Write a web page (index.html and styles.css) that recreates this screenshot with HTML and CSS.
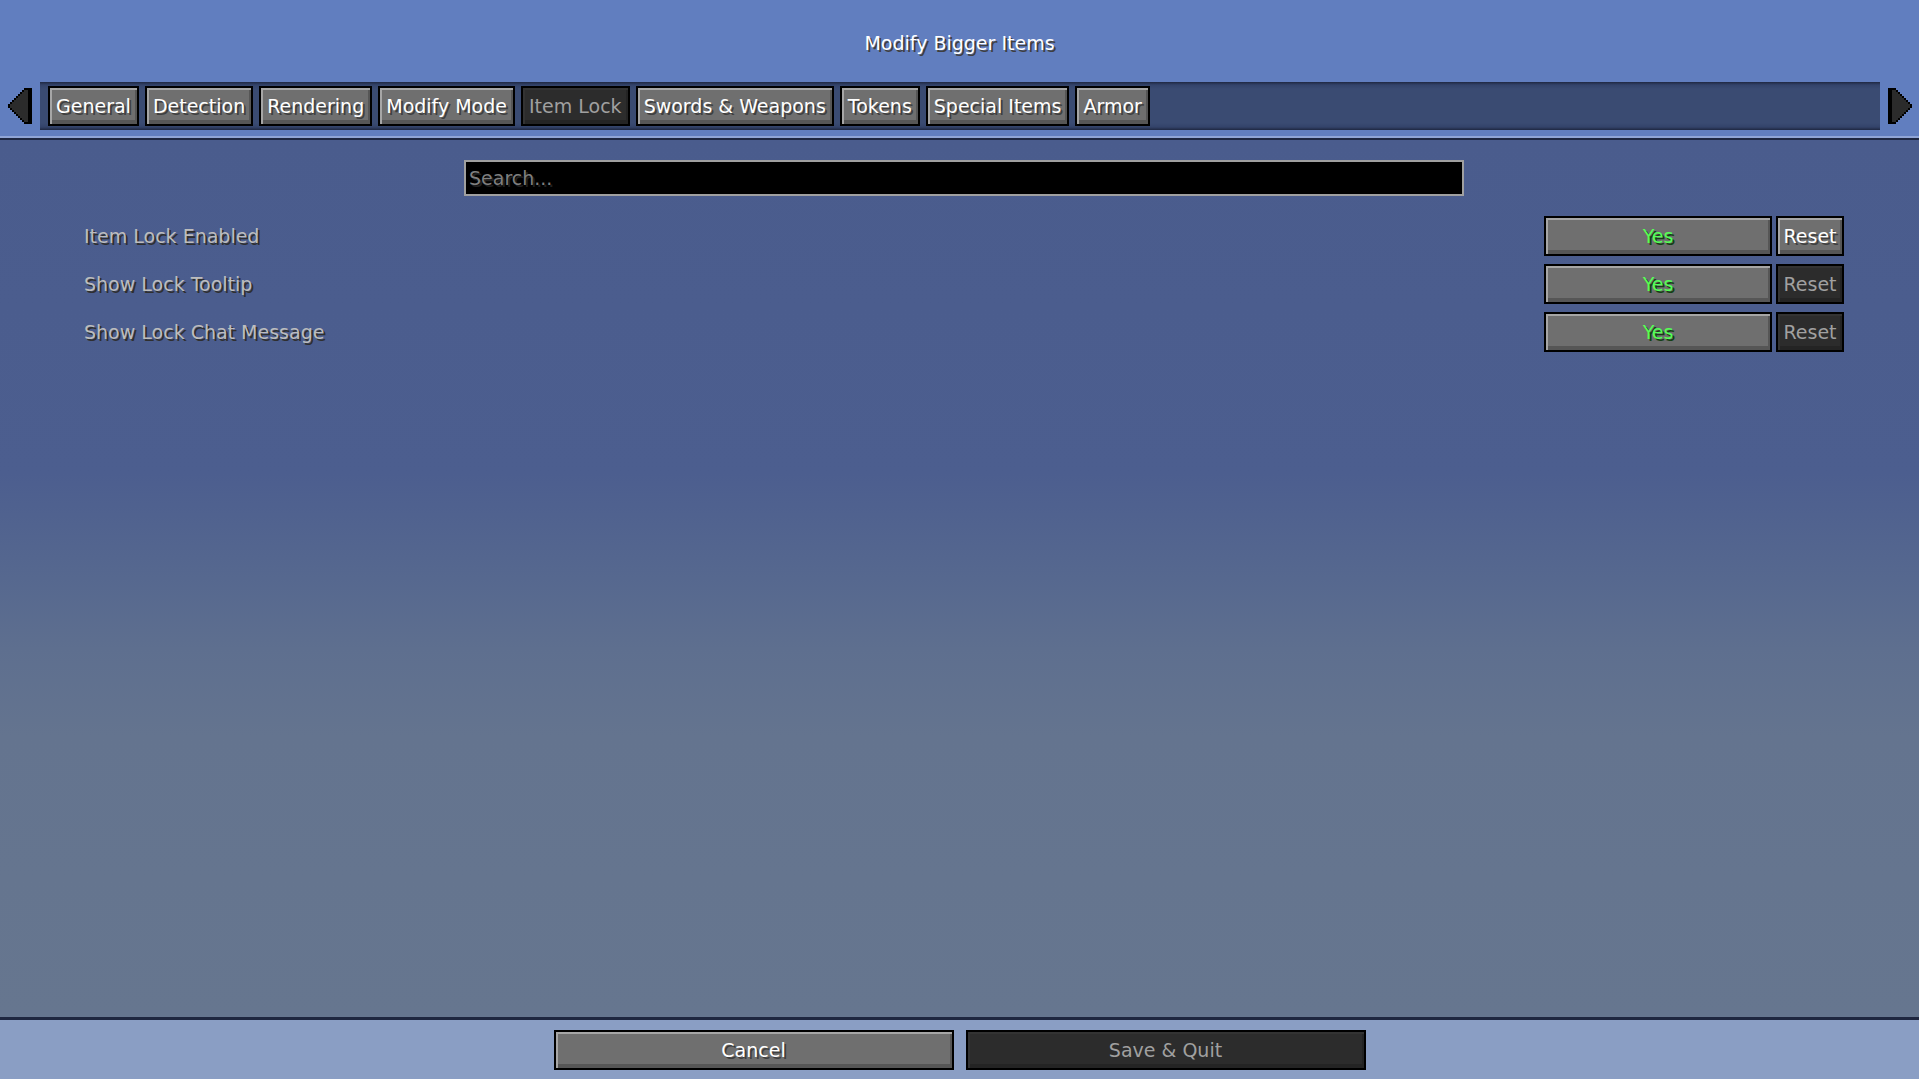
FILE: index.html
```html
<!DOCTYPE html>
<html lang="en">
<head>
<meta charset="utf-8">
<title>Modify Bigger Items</title>
<link rel="stylesheet" href="styles.css">
</head>
<body>
<div class="screen">
  <header class="top">
    <h1 class="title">Modify Bigger Items</h1>
    <div class="tabrow">
      <span class="arrow">
        <svg width="24" height="36" viewBox="0 0 12 18" shape-rendering="crispEdges">
          <path fill="#000" d="M12 0 H8 V1 H7 V2 H6 V3 H5 V4 H4 V5 H3 V6 H2 V7 H1 V8 H0 V10 H1 V11 H2 V12 H3 V13 H4 V14 H5 V15 H6 V16 H7 V17 H8 V18 H12 Z"/>
          <path fill="#2b2b2b" d="M10 1 H8 V2 H7 V3 H6 V4 H5 V5 H4 V6 H3 V7 H2 V8 H1 V10 H2 V11 H3 V12 H4 V13 H5 V14 H6 V15 H7 V16 H8 V17 H10 Z"/>
        </svg>
      </span>
      <nav class="tabbar">
        <span class="btn tab">General</span>
        <span class="btn tab">Detection</span>
        <span class="btn tab">Rendering</span>
        <span class="btn tab">Modify Mode</span>
        <span class="btn tab off">Item Lock</span>
        <span class="btn tab">Swords &amp; Weapons</span>
        <span class="btn tab">Tokens</span>
        <span class="btn tab">Special Items</span>
        <span class="btn tab">Armor</span>
      </nav>
      <span class="arrow">
        <svg width="24" height="36" viewBox="0 0 12 18" shape-rendering="crispEdges">
          <g transform="matrix(-1 0 0 1 12 0)">
            <path fill="#000" d="M12 0 H8 V1 H7 V2 H6 V3 H5 V4 H4 V5 H3 V6 H2 V7 H1 V8 H0 V10 H1 V11 H2 V12 H3 V13 H4 V14 H5 V15 H6 V16 H7 V17 H8 V18 H12 Z"/>
            <path fill="#2b2b2b" d="M10 1 H8 V2 H7 V3 H6 V4 H5 V5 H4 V6 H3 V7 H2 V8 H1 V10 H2 V11 H3 V12 H4 V13 H5 V14 H6 V15 H7 V16 H8 V17 H10 Z"/>
          </g>
        </svg>
      </span>
    </div>
  </header>
  <div class="sep-top"></div>

  <main class="list">
    <div class="search"><span class="placeholder">Search...</span></div>
    <div class="entries">
      <div class="entry">
        <span class="label">Item Lock Enabled</span>
        <div class="controls">
          <span class="btn value yes">Yes</span>
          <span class="btn reset">Reset</span>
        </div>
      </div>
      <div class="entry">
        <span class="label">Show Lock Tooltip</span>
        <div class="controls">
          <span class="btn value yes">Yes</span>
          <span class="btn reset off">Reset</span>
        </div>
      </div>
      <div class="entry">
        <span class="label">Show Lock Chat Message</span>
        <div class="controls">
          <span class="btn value yes">Yes</span>
          <span class="btn reset off">Reset</span>
        </div>
      </div>
    </div>
  </main>

  <div class="sep-bottom"></div>
  <footer class="bottom">
    <span class="btn wide">Cancel</span>
    <span class="btn wide off">Save &amp; Quit</span>
  </footer>
</div>
</body>
</html>
```

FILE: styles.css
```css
* {
  box-sizing: border-box;
}

html, body {
  margin: 0;
  padding: 0;
  background: #617ebf;
}

body {
  font-family: "DejaVu Sans", "Noto Sans", sans-serif;
  font-size: 19px;
  line-height: 16px;
  color: #fff;
  overflow: hidden;
}

.screen {
  width: 1919px;
  height: 1079px;
  display: flex;
  flex-direction: column;
}

/* ---------- header: title + category tabs ---------- */
.top {
  height: 136px;
  flex: none;
  background: #617ebf;
  display: flex;
  flex-direction: column;
}

.title {
  margin: 0;
  padding-top: 35px;
  font-size: 19px;
  font-weight: normal;
  line-height: 16px;
  text-align: center;
  color: #fff;
  text-shadow: 2px 2px 0 #3f3f3f;
}

.tabrow {
  margin-top: 31px;
  height: 48px;
  display: flex;
  align-items: center;
  gap: 8px;
  padding: 0 7px 0 8px;
}

.arrow {
  width: 24px;
  height: 36px;
  flex: none;
  display: block;
}

.arrow svg {
  display: block;
}

.tabbar {
  flex: 1;
  height: 48px;
  display: flex;
  align-items: center;
  gap: 6px;
  padding: 0 8px;
  background: linear-gradient(to bottom,
    #1f2842 0, #33436a 3px, #3a4b72 7px,
    #3a4b72 calc(100% - 7px), #33436a calc(100% - 3px), #1f2842 100%);
}

/* ---------- button look (stone button) ---------- */
.btn {
  height: 40px;
  display: flex;
  align-items: center;
  justify-content: center;
  border: 2px solid #000;
  background: #6f6f6f;
  box-shadow: inset 2px 2px 0 #a6a6a6, inset -2px -4px 0 #565656;
  color: #fff;
  text-shadow: 2px 2px 0 #3f3f3f;
  white-space: nowrap;
  flex: none;
}

.btn.off {
  background: #2c2c2c;
  box-shadow: inset 2px 2px 0 #333, inset -2px -4px 0 #242424;
  color: #a0a0a0;
  text-shadow: none;
}

.tab {
  padding: 0 6px;
}

/* ---------- separators ---------- */
.sep-top {
  height: 4px;
  flex: none;
  background: linear-gradient(to bottom, #90a5d6 0, #90a5d6 2px, #1e2741 2px, #1e2741 4px);
}

.sep-bottom {
  height: 3px;
  flex: none;
  background: #1f2740;
}

/* ---------- list area ---------- */
.list {
  flex: 1;
  padding-top: 20px;
  background: linear-gradient(to bottom,
    #4a5c8d 0%, #4c5e8f 38%, #56688f 50%, #5e6f8f 58%,
    #64748f 68%, #66768f 100%);
}

.search {
  margin-left: 464px;
  width: 1000px;
  height: 36px;
  background: #000;
  border: 2px solid #a0a0a0;
  display: flex;
  align-items: center;
  padding-left: 3px;
}

.placeholder {
  color: #7f7f7f;
  text-shadow: 2px 2px 0 #202020;
}

.entries {
  margin-top: 20px;
  display: flex;
  flex-direction: column;
  gap: 8px;
}

.entry {
  height: 40px;
  display: flex;
  align-items: center;
  justify-content: space-between;
  padding: 0 75px 0 84px;
}

.label {
  color: #bdbdbd;
  text-shadow: 2px 2px 0 #2f2f2f;
}

.controls {
  display: flex;
  gap: 4px;
}

.value {
  width: 228px;
}

.yes {
  color: #55ff55;
  text-shadow: 2px 2px 0 #153f15;
}

.reset {
  width: 68px;
}

/* ---------- footer ---------- */
.bottom {
  height: 59px;
  flex: none;
  background: #8a9ec4;
  display: flex;
  justify-content: center;
  gap: 12px;
  padding-top: 10px;
}

.wide {
  width: 400px;
}
```
